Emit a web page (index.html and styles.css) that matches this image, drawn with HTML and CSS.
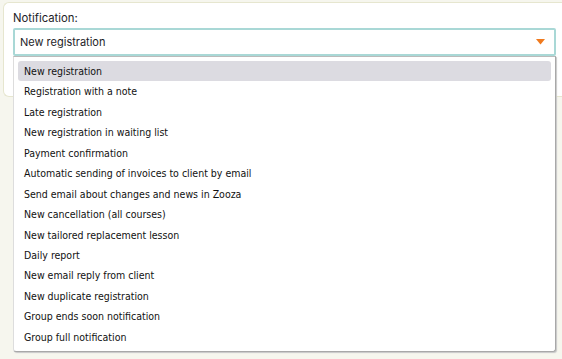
FILE: index.html
```html
<!DOCTYPE html>
<html lang="en">
<head>
    <meta charset="UTF-8">
    <title>Notification</title>
    <link rel="stylesheet" href="styles.css">
</head>
<body>
    <div class="card">
        <label class="field-label">Notification:</label>
        <div class="select-wrap">
            <div class="select-box">
                <span>New registration</span>
                <svg class="caret" width="9" height="6" viewBox="0 0 9 6"><path d="M0 0H9L4.5 5.5Z" fill="#f07a1e"/></svg>
            </div>
            <ul class="dropdown">
                <li class="active">New registration</li>
                <li>Registration with a note</li>
                <li>Late registration</li>
                <li>New registration in waiting list</li>
                <li>Payment confirmation</li>
                <li>Automatic sending of invoices to client by email</li>
                <li>Send email about changes and news in Zooza</li>
                <li>New cancellation (all courses)</li>
                <li>New tailored replacement lesson</li>
                <li>Daily report</li>
                <li>New email reply from client</li>
                <li>New duplicate registration</li>
                <li>Group ends soon notification</li>
                <li>Group full notification</li>
            </ul>
        </div>
    </div>
</body>
</html>
```

FILE: styles.css
```css
body {
    margin: 0;
    background: #f6f6ee;
    font-family: 'Inter', 'Noto Sans', sans-serif;
    color: #1d1d28;
    height: 359px;
    overflow: hidden;
}
.card {
    margin: 2px 0 0 3px;
    background: #fff;
    border: 1px solid #e6e6cf;
    border-right: none;
    border-radius: 6px 0 0 6px;
    padding: 8px 6px 40px 9px;
}
.field-label {
    display: block;
    font-size: 11.3px;
    line-height: 14px;
    margin-bottom: 3px;
}
.select-wrap {
    position: relative;
}
.select-box {
    display: flex;
    align-items: center;
    justify-content: space-between;
    height: 24px;
    border: 2px solid #a9d8d6;
    border-radius: 2px;
    padding: 0 9px 0 5px;
    font-size: 11px;
}
.dropdown {
    position: absolute;
    top: 28px;
    left: 0;
    right: 0;
    margin: 0;
    padding: 4px;
    list-style: none;
    background: #fff;
    border: 1px solid #a8a8a8;
    border-top-color: #bbb;
    border-left-color: #ddd;
    border-radius: 0 0 3px 3px;
    box-shadow: 1px 1px 1px #c8c8c8;
    font-family: 'DejaVu Sans Condensed', 'DejaVu Sans', sans-serif;
    font-size: 10.5px;
    color: #111;
}
.dropdown li {
    height: 20.45px;
    line-height: 20px;
    padding-left: 6px;
    border-radius: 3px;
}
.dropdown li.active {
    background: #dcdbe1;
}
```
